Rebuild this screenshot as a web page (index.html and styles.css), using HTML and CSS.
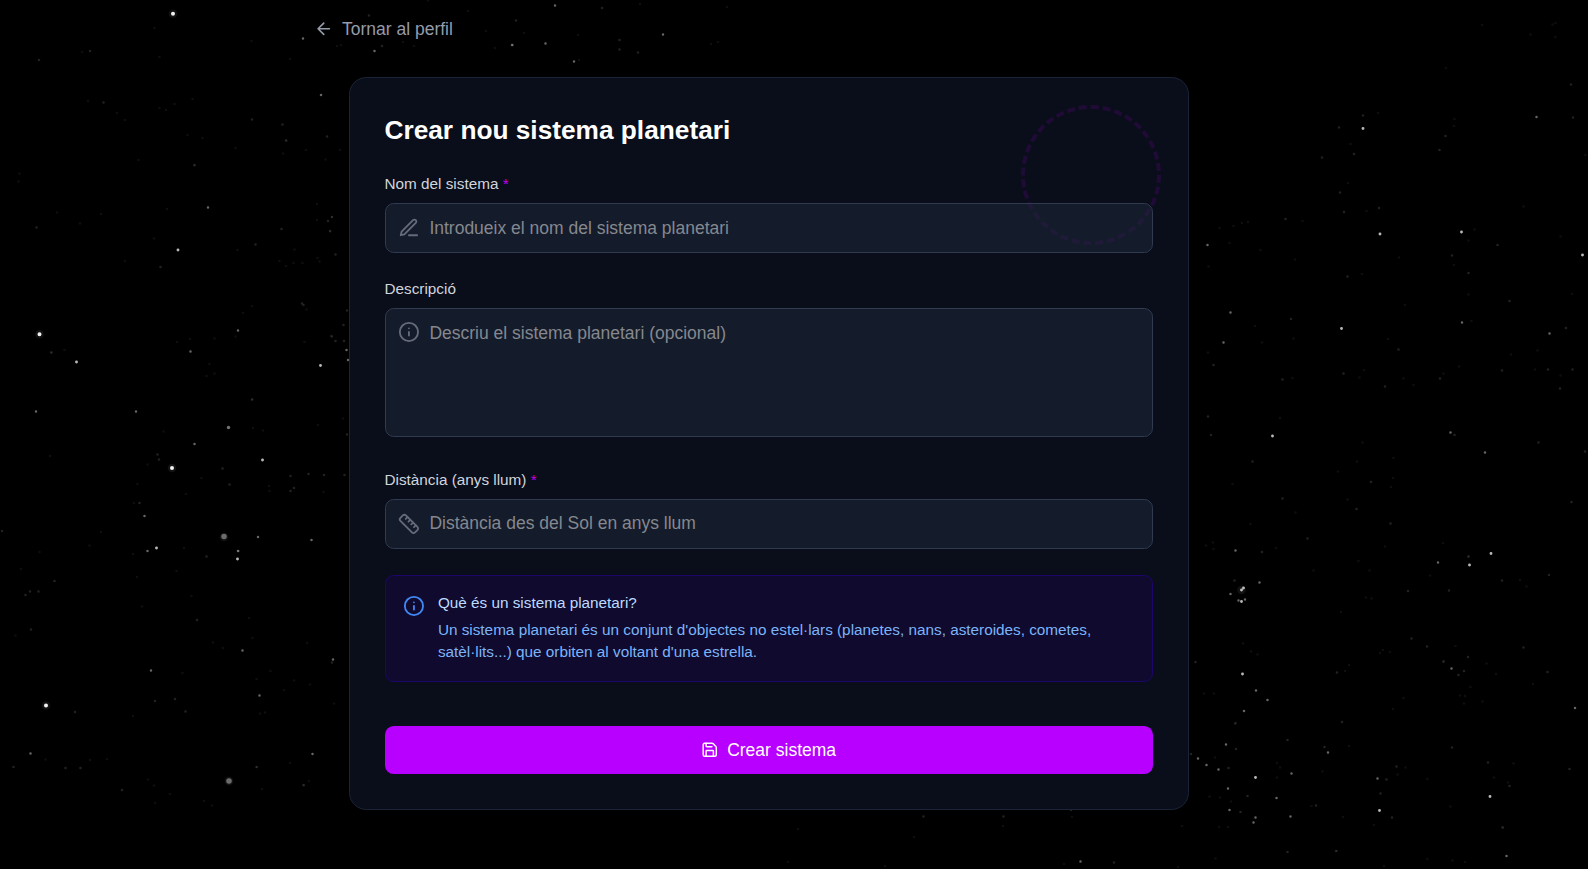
FILE: index.html
```html
<!DOCTYPE html>
<html lang="ca">
<head>
<meta charset="utf-8">
<title>Crear nou sistema planetari</title>
<link rel="stylesheet" href="styles.css">
</head>
<body>
<svg class="sky" viewBox="0 0 1588 869" aria-hidden="true">
  <path class="star faint" d="M154.500 28h0M251.500 41h0M159.500 57h0M290 59h0M82 52h0M192.500 99h0M159.500 108h0M166 110h0M174.500 104h0M117 113h0M125 120h0M88 101h0M187.500 135h0M202.500 138h0M235.500 148h0M286.500 140.500h0M283 153.500h0M306 150h0M340 150h0M325.500 159.500h0M138.500 160h0M19.500 173.500h0M18.500 181.500h0M194.500 165.500h0M167 209h0M57 212.500h0M101 214h0M80 223.500h0M317 204h0M317 220h0M330.500 231.500h0M332 217h0M154 238.500h0M237.500 250h0M279.500 261h0M293.500 263h0M302.500 263h0M286 266h0M294.500 249.500h0M317.500 258h0M319.500 261.500h0M125 261h0M252 306h0M243 313h0M306.500 309.500h0M64.500 350h0M51 352.500h0M190 339h0M214.500 338.500h0M235.500 336.500h0M177 342h0M209.500 364h0M214.500 373.500h0M206.500 376h0M304.500 342h0M332 337h0M252.500 399.500h0M163.500 431.500h0M253 428h0M263 430.500h0M318 425h0M343 418.500h0M50 456h0M147.500 464.500h0M201.500 478h0M134 503h0M137.500 484h0M186 494h0M269 486h0M269.500 491h0M323.500 492h0M89.500 545.500h0M101 532h0M39.500 552h0M21 569h0M133 554h0M184 548h0M176.500 571h0M137 577h0M142 606.500h0M191.500 596h0M249 618h0M252.500 638h0M213 642.500h0M223 648h0M15.500 635.500h0M270.500 671h0M256.500 679h0M294 680.500h0M284 690h0M182.500 673h0M307 643h0M310 684.500h0M334 703.500h0M260 713.500h0M265 712.500h0M133 716h0M45.500 759.500h0M90 760h0M107 759h0M148 779.500h0M154 785.500h0M170 794h0M204 801h0M212 805.500h0M257 767h0M262 789h0M304 785.500h0M309 781h0M290 763h0M155 803h0M1482 25h0M1530.500 34.500h0M1555.500 23h0M1552.500 24.500h0M1555.500 37h0M1446 68h0M1378 113h0M1454.500 119h0M1454 126h0M1350.500 144h0M1348 183h0M1585.500 155h0M1233.500 226h0M1242 223h0M1248 222h0M1219.500 228h0M1229.500 243h0M1260.500 250h0M1302.500 221h0M1366.500 211h0M1295 259.500h0M1208.500 266.500h0M1399 257.500h0M1468.500 240.500h0M1474.500 229.500h0M1454 265h0M1468.500 294.500h0M1362 274h0M1523.500 206.500h0M1560.500 236.500h0M1572 294h0M1405 305h0M1471.500 321h0M1255 326h0M1293.500 338.500h0M1262 342.500h0M1208 352.500h0M1388 339h0M1413.500 385h0M1403.500 378.500h0M1364 370h0M1359.500 377.500h0M1292.500 378h0M1443.500 373.500h0M1459 366.500h0M1511 354.500h0M1537.500 350.500h0M1560.500 375.500h0M1535 369.500h0M1280 418h0M1362.500 442.500h0M1357 461.500h0M1393.500 458h0M1393 478h0M1338 471.500h0M1232.500 484h0M1295.500 512.500h0M1347.500 499.500h0M1250.500 524h0M1213 542.500h0M1206 545.500h0M1213.500 549h0M1276 548h0M1313.500 570.500h0M1358.500 561h0M1369.500 570.500h0M1391 487h0M1443 543h0M1385 546.500h0M1468.500 556.500h0M1430 575.500h0M1341 612h0M1366 597.500h0M1371.500 598.500h0M1520 580h0M1526.500 586.500h0M1243 643.500h0M1251 651.500h0M1257.500 654.500h0M1349 665h0M1345 671h0M1380 653h0M1383 650h0M1390 652h0M1455.500 646h0M1443.500 661.500h0M1486.500 663.500h0M1496 674h0M1470.500 687h0M1460 695.500h0M1465 696h0M1464 703.500h0M1482.500 701.500h0M1533 684h0M1403.500 698h0M1393 709h0M1204 693.500h0M1214 693.500h0M1215 757.500h0M1235 724h0M1277 763h0M1280 767.500h0M1277 777.500h0M1349 746h0M1322.500 771.500h0M1427.500 779h0M1397.500 774.500h0M1405.500 767.500h0M1209.500 796.500h0M1220 797.500h0M1231 801.500h0M1311.500 806h0M1343 817h0M1374 825h0M1450.500 806.500h0M1494 777.500h0M1508 782.500h0M1513.500 763.500h0M1503 827.500h0M1337 851h0M1215.500 858.500h0M1427.500 859h0M1452.500 860.500h0M1465 862h0M1384 866h0M1228 827h0M1219 827h0M414 46h0M403 42h0M337 46h0M341 45h0M495 48h0M578 35h0M468 11h0M428 0.500h0M486 31h0M640 4h0M711 44h0M718 42h0M727 7h0M524 33h0M579 60h0M1003 826h0M914 837h0M798 829h0M1072 817h0M788 862h0M885 866h0M1064 864h0M1182 826h0M1178 867h0"/>
  <path class="star dim" d="M90 51h0M39 60h0M103.500 102.500h0M252 119.500h0M282.500 124.500h0M286 140.500h0M327 136.500h0M194.500 165h0M281.500 229h0M328 221h0M332 217h0M330 231h0M36.500 227.500h0M255.500 244.500h0M335.500 254.500h0M160.500 267h0M302 303.500h0M303.500 305h0M347 310.500h0M343.500 325h0M335.500 341h0M344 341h0M331.500 336h0M51.500 352.500h0M252 399.500h0M347 434.500h0M157.500 454.500h0M159 459.500h0M222.500 468.500h0M229.500 484.500h0M290.500 476h0M290.500 491h0M308.500 474h0M324 475h0M344.500 475h0M294 488h0M139.500 503h0M2 531h0M206.500 556.500h0M54.500 581h0M30 591.500h0M25.500 595h0M38.500 591.500h0M31 629.500h0M197 620h0M238.500 551h0M155 701h0M175 699h0M185.500 711.500h0M75 712h0M13.500 767h0M65.500 768h0M80.500 768h0M122 790h0M256.500 767h0M303.500 785h0M332 662.500h0M1363 115.500h0M1339 127.500h0M1322 157.500h0M1354 154h0M1445.500 136h0M1439.500 150h0M1573 117.500h0M1340 192.500h0M1379 208h0M1285.500 219h0M1344 212h0M1571 84.500h0M1497.500 245h0M1452 255.500h0M1468.500 273h0M1347.500 276.500h0M1509.500 301h0M1566 328h0M1291 319h0M1398.500 349.500h0M1213.500 365h0M1282.500 379.500h0M1343.500 373.500h0M1385 386.500h0M1440 378.500h0M1502 370.500h0M1548 369.500h0M1572.500 369.500h0M1560 388.500h0M1208 416.500h0M1211 435h0M1454.500 435h0M1538.500 442.500h0M1585 451.500h0M1252.500 461.500h0M1282.500 498.500h0M1371 482h0M1356.500 509h0M1390.500 523.500h0M1571.500 502h0M1307.500 538.500h0M1262 552h0M1468.500 556.500h0M1449 590.500h0M1502 580.500h0M1549 575h0M1234.500 580.500h0M1408 591h0M1411.500 638.500h0M1427 646.500h0M1523.500 647.500h0M1468 657h0M1443.500 661.500h0M1458.500 675h0M1464 671h0M1547.500 672h0M1337 672.500h0M1195.500 662h0M1342 722h0M1287.500 740h0M1324.500 747h0M1452 747.500h0M1396.500 766.500h0M1386.500 779.500h0M1235.500 723h0M1236 749h0M1228.500 768h0M1247.500 796h0M1240.500 812h0M1316 805.500h0M1380.500 793.500h0M1392 817.500h0M1488 762.500h0M1509.500 786h0M1569.500 769h0M1287.500 852h0M1336 851h0M1502.500 827.500h0M1191 754h0M382 46h0M369 15.500h0M513 45h0M516 20.500h0M619.500 40h0M619.500 49.500h0M602 8h0M638 52.500h0M1114 862.500h0M1003.500 816.500h0M923.500 816.500h0M1071 810h0M358 28h0"/>
  <path class="star mid" d="M321 95h0M208 207.500h0M238 330.500h0M190.500 351.500h0M36 411.500h0M136 411.500h0M346.500 350h0M348 360h0M194.500 444h0M144.500 516h0M147.500 551h0M258 537h0M238 551h0M311.500 540h0M30.500 753.500h0M312.500 754h0M333 659.500h0M259.500 695.500h0M151 670.500h0M242.500 650.500h0M303 38.500h0M374.500 51h0M545.500 43.500h0M555 5.500h0M663 34.500h0M574 61.500h0M512 45h0M1536.500 117h0M1207.500 245h0M1230.500 312.500h0M1223.500 342.500h0M1462 322.500h0M1549.500 333.500h0M1450.500 432.500h0M1485 452.500h0M1235.500 550.500h0M1230.500 594h0M1259.500 582.500h0M1238.500 600.500h0M1245 599.500h0M1438 562.500h0M1451.500 668.500h0M1256 690.500h0M1267.500 700h0M1244 711h0M1226 744.500h0M1198 758.500h0M1206.500 765h0M1218.500 769.500h0M1228 788.500h0M1276.500 798h0M1291.500 773.500h0M1328 752.500h0M1229.500 810h0M1255.500 817.500h0M1253.500 822.500h0M1290.500 816.500h0M1377.500 778.500h0M1575 708h0M1506.500 856h0M1080.500 861.500h0"/>
  <path class="star bright" d="M76.500 362h0M178 250h0M320.500 365.500h0M262.500 460h0M156.500 548h0M237.500 559h0M1363 128.500h0M1380 234h0M1461.500 232h0M1582.500 255h0M1341.500 328.500h0M1272.500 436h0M1491 553.500h0M1469.500 565h0M1241.500 590h0M1243.500 588h0M1241.500 601.500h0M1242.500 674h0M1255.500 777.500h0M1379.500 810.500h0M1490 796.500h0"/>
  <path class="glow" d="M173 13.700h0M39.500 334.300h0M172 468h0M46 705.500h0M1241.500 590h0M224 537h0M229 781h0"/>
  <path class="star large" d="M173 13.700h0M39.500 334.300h0M172 468h0M46 705.500h0"/>
  <path class="star hazy" d="M224 536.500h0M229 781h0"/>
  <path class="star soft" d="M228.500 427.500h0"/>
</svg>

<main class="page">
  <a class="back" href="#">
    <svg class="icon back-icon" viewBox="0 0 24 24"><path d="M19 12H5M12 19l-7-7 7-7"/></svg>
    <span>Tornar al perfil</span>
  </a>

  <section class="card">
    <div class="orbit"></div>
    <h1 class="title">Crear nou sistema planetari</h1>
    <form class="form">
      <div class="group">
        <label class="label" for="name">Nom del sistema <span class="required">*</span></label>
        <div class="field">
          <svg class="icon" viewBox="0 0 24 24"><path d="M12 20h9"/><path d="M16.500 3.500a2.121 2.121 0 0 1 3 3L7 19l-4 1 1-4z"/></svg>
          <input class="control" id="name" placeholder="Introdueix el nom del sistema planetari">
        </div>
      </div>
      <div class="group group-description">
        <label class="label" for="description">Descripció</label>
        <div class="field field-area">
          <svg class="icon" viewBox="0 0 24 24"><circle cx="12" cy="12" r="10"/><path d="M12 16v-4M12 8h.01"/></svg>
          <textarea class="control" id="description" placeholder="Descriu el sistema planetari (opcional)"></textarea>
        </div>
      </div>
      <div class="group group-distance">
        <label class="label" for="distance">Distància (anys llum) <span class="required">*</span></label>
        <div class="field field-distance">
          <svg class="icon" viewBox="0 0 24 24"><path d="M21.300 15.300a2.400 2.400 0 0 1 0 3.400l-2.600 2.600a2.400 2.400 0 0 1-3.400 0L2.700 8.700a2.410 2.410 0 0 1 0-3.400l2.600-2.600a2.410 2.410 0 0 1 3.400 0z"/><path d="m14.500 12.500 2-2M11.500 9.500l2-2M8.500 6.500l2-2M17.500 15.500l2-2"/></svg>
          <input class="control" id="distance" placeholder="Distància des del Sol en anys llum">
        </div>
      </div>
      <aside class="info">
        <svg class="icon info-icon" viewBox="0 0 24 24"><circle cx="12" cy="12" r="10"/><path d="M12 16v-4M12 8h.01"/></svg>
        <div>
          <h2 class="info-title">Què és un sistema planetari?</h2>
          <p class="info-text">Un sistema planetari és un conjunt d'objectes no estel·lars (planetes, nans, asteroides, cometes, satèl·lits...) que orbiten al voltant d'una estrella.</p>
        </div>
      </aside>
      <button class="submit" type="button">
        <svg class="icon submit-icon" viewBox="0 0 24 24"><path d="M15.200 3a2 2 0 0 1 1.400.6l3.800 3.800a2 2 0 0 1 .6 1.400V19a2 2 0 0 1-2 2H5a2 2 0 0 1-2-2V5a2 2 0 0 1 2-2z"/><path d="M17 21v-7a1 1 0 0 0-1-1H8a1 1 0 0 0-1 1v7M7 3v4a1 1 0 0 0 1 1h7"/></svg>
        <span>Crear sistema</span>
      </button>
    </form>
  </section>
</main>
</body>
</html>
```
FILE: styles.css
```css
html {
  font-size: 17.5px;
  background: #000;
}

* {
  box-sizing: border-box;
}

body {
  margin: 0;
  height: 869px;
  overflow: hidden;
  color: #fff;
  font-family: "Liberation Sans", Arial, sans-serif;
  line-height: 1.5;
}

.sky {
  position: absolute;
  inset: 0;
  width: 1588px;
  height: 869px;
}

.star {
  fill: none;
  stroke: #fff;
  stroke-linecap: round;
  stroke-width: 2.6;
}

.faint { stroke-opacity: .055; }
.dim { stroke-opacity: .13; }
.mid { stroke-opacity: .4; stroke-width: 2.5; }
.bright { stroke-opacity: .72; stroke-width: 2.9; }
.large { stroke-width: 4; stroke-opacity: .95; }
.hazy { stroke-width: 5.5; stroke-opacity: .38; }
.soft { stroke-width: 3.4; stroke-opacity: .45; }

.glow {
  fill: none;
  stroke: #fff;
  stroke-linecap: round;
  stroke-width: 8.5;
  stroke-opacity: .07;
}

.page {
  position: relative;
  width: 910px;
  margin-left: 313.500px;
  padding-top: 16px;
}

.back {
  display: flex;
  width: max-content;
  align-items: center;
  gap: 9px;
  height: 26px;
  color: #949bab;
  text-decoration: none;
}

.icon {
  flex: none;
  width: 21.875px;
  height: 21.875px;
  fill: none;
  stroke: currentColor;
  stroke-width: 2;
  stroke-linecap: round;
  stroke-linejoin: round;
}

.back-icon {
  width: 19.500px;
  height: 19.500px;
}

.card {
  position: relative;
  width: 840px;
  height: 733px;
  margin: 35px 0 0 35px;
  padding: 35px;
  border: 1px solid #1b2436;
  border-radius: 17.500px;
  background: #0a0d1a;
}

.orbit {
  position: absolute;
  top: 27px;
  right: 26.500px;
  width: 140px;
  height: 140px;
  border: 4px dashed #b700ff;
  border-radius: 50%;
  opacity: .12;
}

.title {
  margin: 0 0 26px;
  font-size: 26.250px;
  line-height: 35px;
}

.form {
  position: relative;
  display: flex;
  flex-direction: column;
}

.label {
  display: block;
  height: 20px;
  margin-bottom: 9px;
  color: #d1d5dc;
  font-size: 15.3125px;
  line-height: 20px;
}

.required {
  color: #c400e6;
}

.field {
  display: flex;
  align-items: center;
  gap: 10px;
  height: 50px;
  padding: 0 13px 0 12px;
  border: 1px solid #303b4f;
  border-radius: 8.750px;
  background: rgba(30, 41, 57, .5);
  color: #666b7b;
}

.field-area {
  align-items: flex-start;
  height: 129px;
  padding-top: 12px;
}

.field-distance {
  padding-bottom: 1px;
}

.control {
  flex: 1;
  height: 26px;
  padding: 0;
  border: 0;
  outline: 0;
  background: transparent;
  color: #fff;
  font: inherit;
  resize: none;
}

.field-area .control {
  height: 100px;
  margin-top: -1px;
}

.control::placeholder {
  color: #85888f;
  opacity: 1;
}

.group-description {
  margin-top: 26px;
}

.group-distance {
  margin-top: 33px;
}

.info {
  display: flex;
  gap: 13.500px;
  height: 107px;
  margin-top: 26px;
  padding: 16px 17.500px 17.500px 17px;
  border: 1px solid #1d066b;
  border-radius: 8.750px;
  background: #0f0a2e;
}

.info-icon {
  margin-top: 2.500px;
  color: #4288f5;
}

.info-title {
  margin: 0 0 5px;
  color: #bedbff;
  font-size: 15.3125px;
  font-weight: 400;
  line-height: 22px;
}

.info-text {
  margin: 0;
  color: #7db4f8;
  font-size: 15.3125px;
  line-height: 22px;
}

.submit {
  display: flex;
  align-items: center;
  justify-content: center;
  gap: 8.750px;
  height: 48px;
  margin-top: 44px;
  padding: 0;
  border: 0;
  border-radius: 8.750px;
  background: #b700ff;
  color: #fff;
  font: inherit;
}

.submit-icon {
  width: 17.500px;
  height: 17.500px;
}
```
